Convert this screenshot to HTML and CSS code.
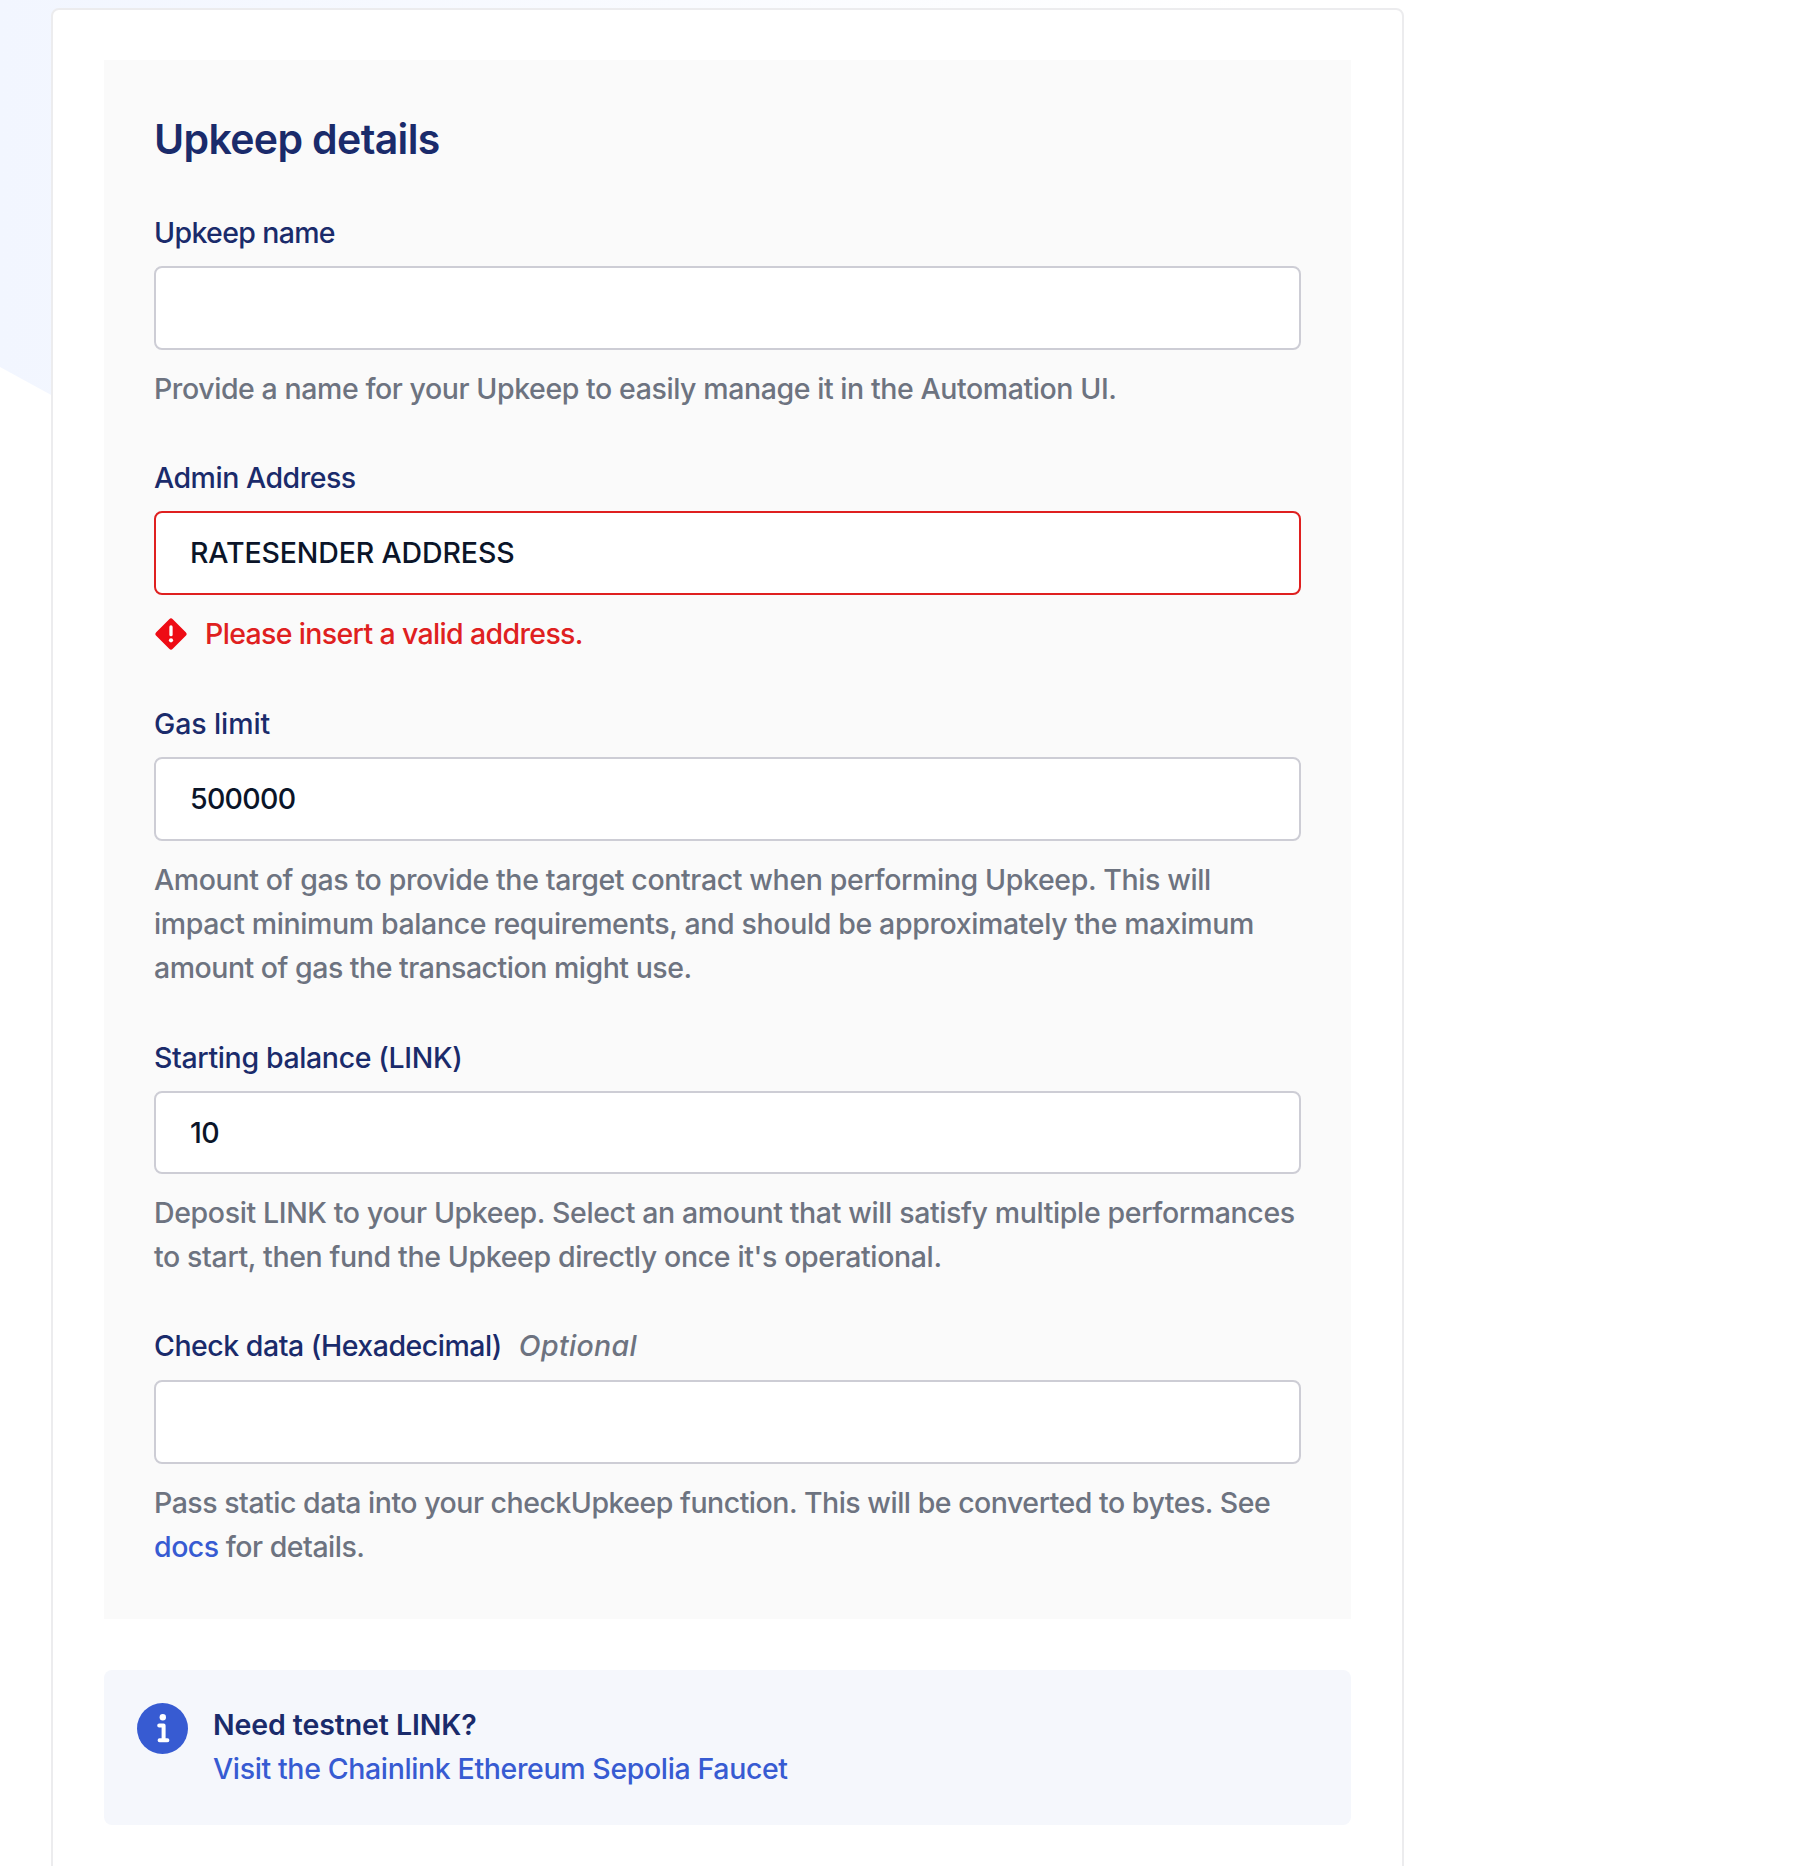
FILE: index.html
```
<!DOCTYPE html>
<html lang="en">
<head>
<meta charset="utf-8">
<title>Upkeep details</title>
<link rel="stylesheet" href="styles.css">
</head>
<body>
<main class="card">
  <form class="panel">
    <h2 class="title">Upkeep details</h2>
    <div class="field">
      <label class="label track-tight" for="name">Upkeep name</label>
      <input class="input" id="name" type="text">
      <p class="help track-even">Provide a name for your Upkeep to easily manage it in the Automation UI.</p>
    </div>
    <div class="field">
      <label class="label track-snug" for="admin">Admin Address</label>
      <input class="input input-error" id="admin" type="text" value="RATESENDER ADDRESS">
      <p class="error track-tight">
        <svg class="error-icon" viewBox="0 0 32 32"><rect x="4.300" y="4.300" width="23.400" height="23.400" rx="2.500" transform="rotate(45 16 16)" fill="#ee0c15"/><path d="M16 8.900v7.800" stroke="#fff" stroke-width="3.300" stroke-linecap="round"/><circle cx="16" cy="22.300" r="2.100" fill="#fff"/></svg>
        Please insert a valid address.
      </p>
    </div>
    <div class="field">
      <label class="label track-wide" for="gas">Gas limit</label>
      <input class="input input-number" id="gas" type="text" value="500000">
      <p class="help">Amount of gas to provide the target contract when performing Upkeep. This will<br>impact minimum balance requirements, and should be approximately the maximum<br><span class="track-snug">amount of gas the transaction might use.</span></p>
    </div>
    <div class="field">
      <label class="label" for="balance">Starting balance (LINK)</label>
      <input class="input input-number input-short" id="balance" type="text" value="10">
      <p class="help">Deposit LINK to your Upkeep. Select an amount that will satisfy multiple performances<br>to start, then fund the Upkeep directly once it's operational.</p>
    </div>
    <div class="field">
      <label class="label track-snug" for="data">Check data (Hexadecimal)<em class="optional">Optional</em></label>
      <input class="input" id="data" type="text">
      <p class="help track-snug">Pass static data into your checkUpkeep function. This will be converted to bytes. See<br><a class="link" href="#">docs</a> for details.</p>
    </div>
  </form>
  <aside class="note">
    <svg class="note-icon" viewBox="0 0 51 51"><circle cx="25.500" cy="25.500" r="25.500" fill="#375bd2"/><circle cx="25.800" cy="14.200" r="3.200" fill="#fff"/><path d="M22.200 22.500h4.400V37M22.600 37.200h7.800" fill="none" stroke="#fff" stroke-width="4" stroke-linecap="round" stroke-linejoin="round"/></svg>
    <div class="note-text">
      <strong class="note-title track-wide">Need testnet LINK?</strong>
      <a class="link" href="#">Visit the Chainlink Ethereum Sepolia Faucet</a>
    </div>
  </aside>
</main>
</body>
</html>
```
FILE: styles.css
```
* { box-sizing: border-box; }

body {
  margin: 0;
  height: 1866px;
  overflow: hidden;
  padding: 8px 0 0 51px;
  background: #fff;
  font: 460 28.5px/44.15px Inter, "Liberation Sans", sans-serif;
  letter-spacing: -0.37px;
  color: #6d7380;
}

/* pale tinted wedge behind the card */
body::before {
  content: "";
  position: absolute;
  inset: 0 auto auto 0;
  z-index: -1;
  width: 1250px;
  height: 1050px;
  background: linear-gradient(90deg, #f2f6ff, #fff);
  clip-path: polygon(0 0, 100% 0, 100% 100%, 0 367px);
}

.card {
  width: 1353px;
  height: 1900px;
  padding: 50px 51px;
  border: 2px solid #ececee;
  border-radius: 8px;
  background: #fff;
}

.panel {
  height: 1559px;
  padding: 51px 50px 0;
  background: #fafafa;
}

.title {
  margin: 0 0 43.65px;
  font-size: 41px;
  font-weight: 600;
  line-height: 56px;
  letter-spacing: -0.64px;
  color: #1a2b6b;
}

.field { margin-bottom: 45.25px; }

.label {
  display: flex;
  gap: 17px;
  margin-bottom: 11px;
  color: #1a2b6b;
}

.optional {
  letter-spacing: 0.3px;
  color: #6d7380;
}

.track-tight { letter-spacing: -0.65px; }
.track-snug { letter-spacing: -0.49px; }
.track-even { letter-spacing: -0.42px; }
.track-wide { letter-spacing: -0.1px; }

.input {
  display: block;
  width: 100%;
  height: 84px;
  padding: 0 34px;
  border: 2px solid #cdcdd5;
  border-radius: 8px;
  background: #fff;
  font: inherit;
  letter-spacing: -0.13px;
  color: #0b1529;
}

.input-number { letter-spacing: -0.7px; }

.input-short { height: 83px; }

.input-error {
  padding-bottom: 1px;
  border-color: #df2020;
}

.help, .error { margin: 17px 0 0; }

.help { white-space: nowrap; }

.error {
  display: flex;
  align-items: center;
  gap: 18px;
  padding-left: 1px;
  color: #df2020;
}

.error-icon { width: 32px; height: 32px; }

.link { color: #375bd2; text-decoration: none; }

.note {
  display: flex;
  gap: 25px;
  height: 155px;
  margin-top: 51px;
  padding: 33px;
  border-radius: 8px;
  background: #f5f7fc;
}

.note-icon { width: 51px; height: 51px; }

.note-text { display: flex; flex-direction: column; }

.note-title { font-weight: 600; color: #1a2b6b; }
```
